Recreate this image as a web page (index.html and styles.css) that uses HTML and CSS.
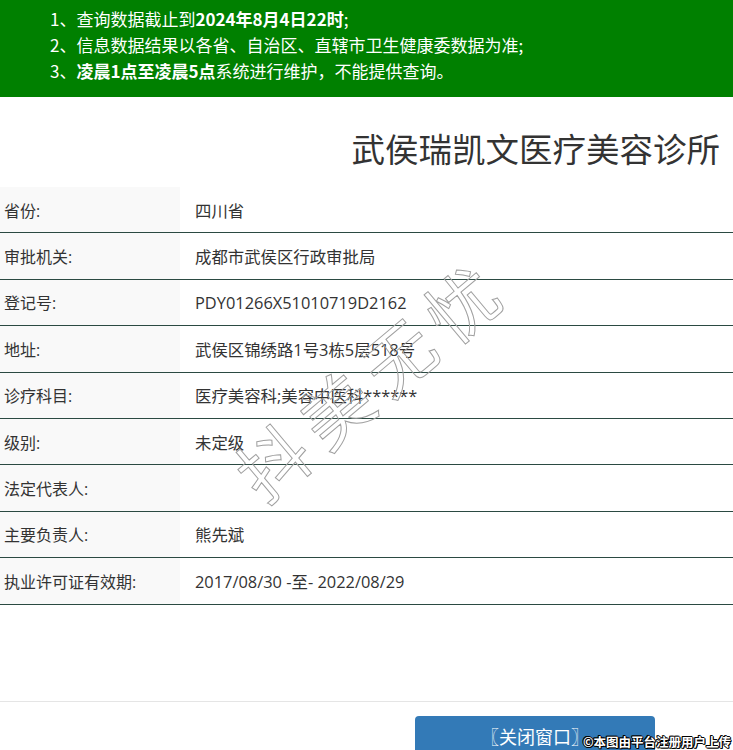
FILE: index.html
```html
<!DOCTYPE html>
<html>
<head>
    <meta charset="utf-8"/>
    <title>医疗机构查询结果</title>
    <link rel="stylesheet" href="styles.css">
</head>
<body>
    <!-- 提示信息 -->
    <div class="notice">
        <div>1、查询数据截止到<b>2024年8月4日22时</b>;</div>
        <div>2、信息数据结果以各省、自治区、直辖市卫生健康委数据为准;</div>
        <div>3、<b>凌晨1点至凌晨5点</b>系统进行维护，不能提供查询。</div>
    </div>

    <div class="org-name">武侯瑞凯文医疗美容诊所</div>

    <table class="info-table">
        <tr><td class="label">省份:</td><td class="value">四川省</td></tr>
        <tr><td class="label">审批机关:</td><td class="value">成都市武侯区行政审批局</td></tr>
        <tr><td class="label">登记号:</td><td class="value">PDY01266X51010719D2162</td></tr>
        <tr><td class="label">地址:</td><td class="value">武侯区锦绣路1号3栋5层518号</td></tr>
        <tr><td class="label">诊疗科目:</td><td class="value">医疗美容科;美容中医科******</td></tr>
        <tr><td class="label">级别:</td><td class="value">未定级</td></tr>
        <tr><td class="label">法定代表人:</td><td class="value"></td></tr>
        <tr><td class="label">主要负责人:</td><td class="value">熊先斌</td></tr>
        <tr><td class="label">执业许可证有效期:</td><td class="value">2017/08/30 -至- 2022/08/29</td></tr>
    </table>

    <div class="footer">
        <button class="close-btn">〖关闭窗口〗</button>
    </div>

    <!-- 水印 -->
    <span class="watermark">抖美无忧</span>
    <span class="copyright">©本图由平台注册用户上传</span>
</body>
</html>
```

FILE: styles.css
```css
body {
    margin: 0;
    font-family: "Open Sans", "Noto Sans CJK SC", sans-serif;
    color: #333;
    background: #fff;
    position: relative;
    height: 750px;
    overflow: hidden;
}

/* 提示信息 */
.notice {
    background-color: #008000;
    color: #fff;
    font-family: "Noto Sans CJK SC", sans-serif;
    font-size: 17px;
    line-height: 26px;
    padding: 6px 0 13px 50px;
}
.notice b {
    font-weight: bold;
}

.org-name {
    text-align: right;
    font-family: "Noto Sans CJK SC", sans-serif;
    font-size: 33.5px;
    line-height: 74px;
    padding: 14px 13px 2px 0;
    color: #333;
}

/* 信息表格 */
.info-table {
    width: 100%;
    border-collapse: collapse;
    font-size: 16px;
}
.info-table td {
    height: 45.4px;
    padding: 0;
    border-bottom: 1px solid #2b4a42;
    vertical-align: middle;
}
.info-table .label {
    width: 176px;
    padding-left: 4px;
    background-color: #f9f9f9;
}
.info-table .value {
    padding-left: 15px;
    font-size: 16.4px;
}

.footer {
    margin-top: 96px;
    border-top: 1px solid #e5e5e5;
    padding: 14px 0 0 415px;
}
.close-btn {
    display: block;
    width: 240px;
    height: 40px;
    padding: 0;
    text-align: center;
    background-color: #337ab7;
    color: #fff;
    border: none;
    border-radius: 4px;
    font-family: "Noto Sans CJK SC", sans-serif;
    font-size: 18px;
    line-height: 26px;
}

/* 水印 */
.watermark {
    position: absolute;
    left: 370px;
    top: 377px;
    transform: translate(-50%, -50%) rotate(-40deg);
    font-family: "Noto Sans CJK SC", sans-serif;
    font-size: 70px;
    letter-spacing: 12px;
    color: transparent;
    -webkit-text-stroke: 1px #a0a0a0;
    white-space: nowrap;
    pointer-events: none;
}
.copyright {
    position: absolute;
    right: 2px;
    bottom: 0;
    font-family: "Noto Sans CJK SC", sans-serif;
    font-size: 12.5px;
    font-weight: bold;
    line-height: 16px;
    color: #fff;
    text-shadow: -1px 0 #000, 1px 0 #000, 0 -1px #000, 0 1px #000, 1px 1px #000, -1px -1px #000;
    white-space: nowrap;
}
```
